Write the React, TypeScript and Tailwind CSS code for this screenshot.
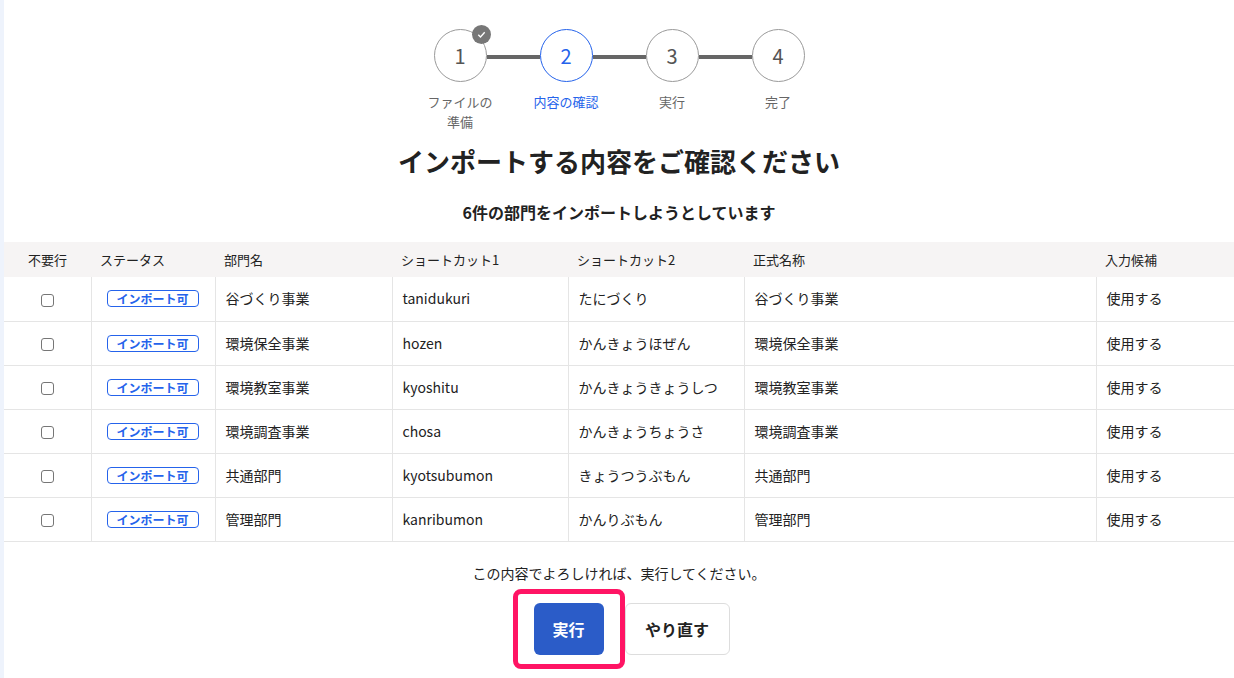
import React from "react";

const rows = [
  ["谷づくり事業", "tanidukuri", "たにづくり"],
  ["環境保全事業", "hozen", "かんきょうほぜん"],
  ["環境教室事業", "kyoshitu", "かんきょうきょうしつ"],
  ["環境調査事業", "chosa", "かんきょうちょうさ"],
  ["共通部門", "kyotsubumon", "きょうつうぶもん"],
  ["管理部門", "kanribumon", "かんりぶもん"],
];

function Step({ n, label, active, done }: { n: number; label: React.ReactNode; active?: boolean; done?: boolean }) {
  return (
    <div className="relative flex w-[53px] flex-col items-center">
      <div className={`relative z-10 flex h-[53px] w-[53px] items-center justify-center rounded-full border bg-white text-[20px] ${active ? "border-[#2563eb] text-[#2563eb]" : "border-[#9a9a9a] text-[#555]"}`}>
        {n}
        {done && (
          <div className="absolute -right-[5px] -top-[5px] flex h-[19px] w-[19px] items-center justify-center rounded-full bg-[#777]">
            <svg width="11" height="11" viewBox="0 0 12 12"><path d="M2.5 6.2l2.4 2.4 4.6-5" stroke="white" strokeWidth="1.5" fill="none" /></svg>
          </div>
        )}
      </div>
      <div className={`absolute top-[63px] w-[90px] text-center text-[13px] leading-[20px] ${active ? "text-[#2563eb]" : "text-[#666]"}`}>{label}</div>
    </div>
  );
}

function Line() {
  return <div className="mt-[26px] h-[4px] w-[53px] bg-[#666]" />;
}

export default function App() {
  const font = { fontFamily: '"Noto Sans CJK JP", "Liberation Sans", sans-serif' };
  return (
    <div className="flex h-[678px] w-[1234px] bg-[#eef3fc]" style={font}>
      <div className="ml-[4px] flex flex-1 flex-col items-center bg-white text-[#222]">
        <div className="mt-[29px] flex h-[104px] items-start">
          <Step n={1} done label={<>ファイルの<br />準備</>} />
          <Line />
          <Step n={2} active label="内容の確認" />
          <Line />
          <Step n={3} label="実行" />
          <Line />
          <Step n={4} label="完了" />
        </div>
        <h1 className="mt-[2px] text-[26px] font-bold leading-[52px]">インポートする内容をご確認ください</h1>
        <div className="mt-[13px] text-[16px] font-bold leading-[24px]">6件の部門をインポートしようとしています</div>
        <table className="mt-[18px] w-full border-collapse text-[14px]">
          <thead>
            <tr className="h-[35px] bg-[#f6f4f4] text-left text-[13px] font-normal">
              <th className="w-[87px] text-center font-normal">不要行</th>
              <th className="w-[124px] pl-[9px] font-normal">ステータス</th>
              <th className="w-[177px] pl-[9px] font-normal">部門名</th>
              <th className="w-[176px] pl-[9px] font-normal">ショートカット1</th>
              <th className="w-[176px] pl-[9px] font-normal">ショートカット2</th>
              <th className="w-[352px] pl-[9px] font-normal">正式名称</th>
              <th className="pl-[9px] font-normal">入力候補</th>
            </tr>
          </thead>
          <tbody>
            {rows.map((r, i) => (
              <tr key={i} className="h-[44px] border-b border-[#e5e5e5]">
                <td className="border-r border-[#e5e5e5] text-center">
                  <span className="inline-block h-[13px] w-[13px] rounded-[3px] border border-[#767676] align-middle" />
                </td>
                <td className="border-r border-[#e5e5e5] pl-[15px]">
                  <span className="inline-block rounded-[4px] border border-[#2563eb] px-[9px] text-[12px] font-bold leading-[15px] text-[#2563eb]">インポート可</span>
                </td>
                <td className="border-r border-[#e5e5e5] pl-[10px]">{r[0]}</td>
                <td className="border-r border-[#e5e5e5] pl-[10px]">{r[1]}</td>
                <td className="border-r border-[#e5e5e5] pl-[10px]">{r[2]}</td>
                <td className="border-r border-[#e5e5e5] pl-[10px]">{r[0]}</td>
                <td className="pl-[10px]">使用する</td>
              </tr>
            ))}
          </tbody>
        </table>
        <div className="mt-[19px] text-[14px] leading-[24px]">この内容でよろしければ、実行してください。</div>
        <div className="mt-[4px] ml-[4px] flex items-center">
          <div className="rounded-[8px] border-[5px] border-[#ff1464] px-[16px] py-[9px]">
            <button className="h-[52px] w-[70px] rounded-[6px] bg-[#2b5cc8] text-[16px] font-bold text-white">実行</button>
          </div>
          <button className="h-[52px] w-[105px] rounded-[6px] border border-[#ddd] bg-white text-[16px] font-bold text-[#222]">やり直す</button>
        </div>
      </div>
    </div>
  );
}
